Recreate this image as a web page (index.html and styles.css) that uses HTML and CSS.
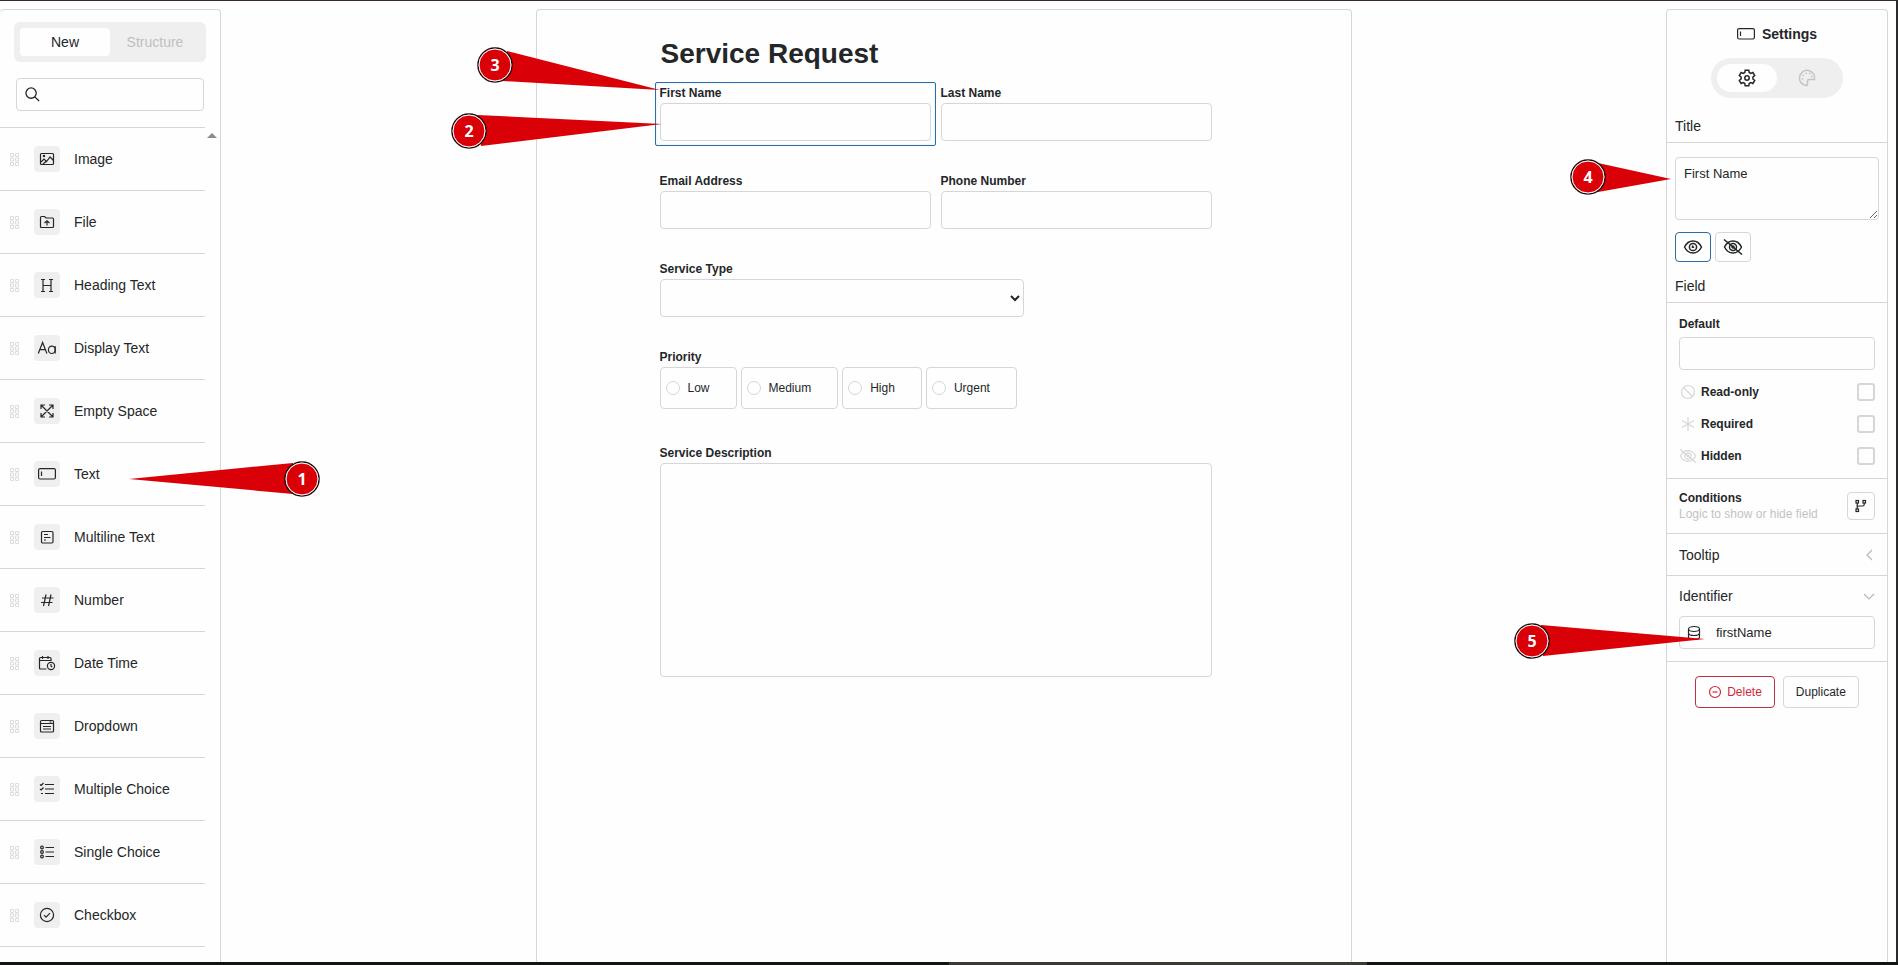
FILE: index.html
```html
<!DOCTYPE html>
<html lang="en">
<head>
    <meta charset="UTF-8">
    <meta name="viewport" content="width=device-width, initial-scale=1.0">
    <title>Service Request - Form Builder</title>
    <link rel="stylesheet" href="styles.css">
</head>
<body>
    <svg class="sprite" aria-hidden="true">
        <symbol id="grip" viewBox="0 0 10 13"><path d="M.5 .5h3v3h-3zM5.500 .5h3v3h-3zM.5 5h3v3h-3zM5.500 5h3v3h-3zM.5 9.500h3v3h-3zM5.500 9.500h3v3h-3z"/></symbol>
        <symbol id="textbox" viewBox="0 0 18 12"><rect x=".6" y=".6" width="16.800" height="10.400" rx="1.500"/><path d="M3.500 3.500v4.500"/></symbol>
        <symbol id="eye-off" viewBox="0 0 20 16"><path d="M1.500 8C3.500 4 6 2 10 2s6.500 2 8.500 6c-2 4-4.500 6-8.500 6s-6.500-2-8.500-6z"/><circle cx="10" cy="8" r="3.500"/><circle cx="10" cy="8" r="1"/><path d="M1 .5l18 15"/></symbol>
    </svg>

    <div class="page">
        <aside class="sidebar">
            <div class="tabs">
                <button type="button" class="tab active">New</button>
                <button type="button" class="tab">Structure</button>
            </div>
            <label class="search">
                <svg width="15" height="15" viewBox="0 0 16 16"><circle cx="6.500" cy="6.500" r="5.500"/><path d="M10.500 10.500l4.500 4.500"/></svg>
                <input type="search" aria-label="Search fields">
            </label>
            <div class="list-wrap">
                <ul class="fields">
                    <li><svg class="grip"><use href="#grip"/></svg><span class="tile"><svg viewBox="0 0 18 18"><rect x="2.500" y="3.500" width="13" height="11" rx="1"/><path d="M3 12l3-3 2.500 2.500L12 7l3.500 3.500M5 14l3.500-3"/><circle cx="6" cy="6" r=".6"/></svg></span>Image</li>
                    <li><svg class="grip"><use href="#grip"/></svg><span class="tile"><svg viewBox="0 0 18 18"><path d="M2.500 14V4.500q0-1 1-1h3L8 5h6.500q1 0 1 1v7.500q0 1-1 1h-11q-1 0-1-1M9 12.500V8M6.500 10L9 7.700 11.500 10"/></svg></span>File</li>
                    <li><svg class="grip"><use href="#grip"/></svg><span class="tile"><svg viewBox="0 0 18 18"><path d="M5 3.500v12M13 3.500v12M5 9.500h8M3 3.500h4M11 3.500h4M3 15.500h4M11 15.500h4"/></svg></span>Heading Text</li>
                    <li><svg class="grip"><use href="#grip"/></svg><span class="tile"><svg viewBox="0 0 18 18"><path d="M.3 14.500L4.600 3.500l4.300 11M2 10.700h5.200M17.200 7v7.500"/><ellipse cx="13.800" cy="10.800" rx="3.400" ry="3.700"/></svg></span>Display Text</li>
                    <li><svg class="grip"><use href="#grip"/></svg><span class="tile"><svg viewBox="0 0 18 18"><path d="M3.500 3.500l11 11M14.500 3.500l-11 11M3 7V3h4M11 3h4v4M3 11v4h4M11 15h4v-4"/></svg></span>Empty Space</li>
                    <li><svg class="grip"><use href="#grip"/></svg><span class="tile"><svg><use href="#textbox" y="3" width="18" height="12"/></svg></span>Text</li>
                    <li><svg class="grip"><use href="#grip"/></svg><span class="tile"><svg viewBox="0 0 18 18"><rect x="3.500" y="3.500" width="11.500" height="11.500" rx="1.200"/><path d="M6 6.500h4M6 9.500h6.500M6 12h2"/></svg></span>Multiline Text</li>
                    <li><svg class="grip"><use href="#grip"/></svg><span class="tile"><svg viewBox="0 0 18 18"><path d="M8 3.500L5.500 15M13 3.500L10.500 15M4 7h11.500M3 11.500h11.500"/></svg></span>Number</li>
                    <li><svg class="grip"><use href="#grip"/></svg><span class="tile"><svg viewBox="0 0 18 18"><path d="M8.500 15h-6q-1 0-1-1V4.500q0-1 1-1H12q1 0 1 1V7M4.500 2v3M10 2v3M2 6.500h11"/><circle cx="13" cy="12" r="3.600"/><path d="M13 10v2.200l1.300.8"/></svg></span>Date Time</li>
                    <li><svg class="grip"><use href="#grip"/></svg><span class="tile"><svg viewBox="0 0 18 18"><rect x="2.500" y="3.500" width="13" height="11.500" rx="1"/><path d="M3 6.500h12.500M5 9.500h8M5 12h8M11.500 5h2"/></svg></span>Dropdown</li>
                    <li><svg class="grip"><use href="#grip"/></svg><span class="tile"><svg viewBox="0 0 18 18"><path d="M7 4.500h9M7 9h9M7 13.500h9M2 4.500l1.200 1L5.500 3M2 9l1.200 1 2.300-2.500M3 13.500h2"/></svg></span>Multiple Choice</li>
                    <li><svg class="grip"><use href="#grip"/></svg><span class="tile"><svg viewBox="0 0 18 18"><path d="M7.500 4.500H16M7.500 9H16M7.500 13.500H16"/><rect x="2.700" y="3.200" width="2.600" height="2.600" rx="1"/><rect x="2.700" y="7.700" width="2.600" height="2.600" rx="1"/><rect x="2.700" y="12.200" width="2.600" height="2.600" rx="1"/></svg></span>Single Choice</li>
                    <li><svg class="grip"><use href="#grip"/></svg><span class="tile"><svg viewBox="0 0 18 18"><circle cx="9" cy="9" r="6.600"/><path d="M6 9.200l2 2 4-4"/></svg></span>Checkbox</li>
                </ul>
                <div class="scroll-track"><div class="scroll-up"></div></div>
            </div>

            <svg class="callout callout-1" width="200" height="40">
                <path class="wedge" d="M4 20L168 4v31z"/>
                <circle class="ring" cx="177" cy="20" r="17"/><circle class="dot" cx="177" cy="20" r="16"/>
                <text x="177" y="26">1</text>
            </svg>
        </aside>

        <main class="canvas">
            <form class="sheet">
                <h1>Service Request</h1>
                <div class="grid">
                    <div class="field selected">
                        <label for="firstName">First Name</label>
                        <input type="text" id="firstName">
                    </div>
                    <div class="field">
                        <label for="lastName">Last Name</label>
                        <input type="text" id="lastName">
                    </div>
                    <div class="field">
                        <label for="email">Email Address</label>
                        <input type="email" id="email">
                    </div>
                    <div class="field">
                        <label for="phone">Phone Number</label>
                        <input type="tel" id="phone">
                    </div>
                    <div class="field wide">
                        <label for="serviceType">Service Type</label>
                        <select id="serviceType">
                            <option value=""></option>
                        </select>
                    </div>
                    <div class="field wide" role="radiogroup" aria-labelledby="priorityLabel">
                        <div class="group-label" id="priorityLabel">Priority</div>
                        <div class="options">
                            <label><input type="radio" name="priority">Low</label>
                            <label><input type="radio" name="priority">Medium</label>
                            <label><input type="radio" name="priority">High</label>
                            <label><input type="radio" name="priority">Urgent</label>
                        </div>
                    </div>
                    <div class="field wide">
                        <label for="description">Service Description</label>
                        <textarea id="description"></textarea>
                    </div>
                </div>

                <svg class="callout callout-2" width="220" height="40">
                    <path class="wedge" d="M213 13L28 4l4 31z"/>
                    <circle class="ring" cx="20" cy="20" r="17"/><circle class="dot" cx="20" cy="20" r="16"/>
                    <text x="20" y="26">2</text>
                </svg>
                <svg class="callout callout-3" width="190" height="50">
                    <path class="wedge" d="M185 45L32 6l-4 30z"/>
                    <circle class="ring" cx="20" cy="20" r="17"/><circle class="dot" cx="20" cy="20" r="16"/>
                    <text x="20" y="26">3</text>
                </svg>
            </form>
        </main>

        <aside class="settings">
            <h2><svg width="18" height="12"><use href="#textbox"/></svg>Settings</h2>
            <div class="pill">
                <button type="button" class="active" aria-label="Options">
                    <svg width="18" height="18" viewBox="0 0 18 18"><path d="M7.200 1.200h3.600l.4 2.300 1.500.9 2.200-.9 1.800 3-1.800 1.500v2l1.800 1.500-1.800 3-2.200-.9-1.500.9-.4 2.300H7.200l-.4-2.300-1.500-.9-2.200.9-1.800-3L3.100 10V8L1.300 6.500l1.800-3 2.200.9 1.500-.9z"/><circle cx="9" cy="9" r="2.200"/></svg>
                </button>
                <button type="button" aria-label="Appearance">
                    <svg width="18" height="18" viewBox="0 0 18 18"><path d="M16.500 10.500A7.600 7.600 0 1 0 8 16.500q1.500.2 1.500-1.500v-3q0-1.500 1.500-1.500z"/><path d="M3.700 10h1.500M4.500 6.500H6M7.500 4.500H9M11 4.500h1.500M13 7.500h1.500"/></svg>
                </button>
            </div>

            <h3><label for="title">Title</label></h3>
            <div class="title-body">
                <textarea id="title">First Name</textarea>
                <div class="eyes">
                    <button type="button" class="on" aria-label="Show title">
                        <svg width="20" height="16" viewBox="0 0 20 16"><path d="M1.500 8C3.500 4 6 2 10 2s6.500 2 8.500 6c-2 4-4.500 6-8.500 6s-6.500-2-8.500-6z"/><circle cx="10" cy="8" r="3.600"/><path d="M9.500 6.500v1.700h1.700"/></svg>
                    </button>
                    <button type="button" aria-label="Hide title"><svg width="20" height="16"><use href="#eye-off"/></svg></button>
                </div>
            </div>

            <h3>Field</h3>
            <section class="field-body">
                <label for="default">Default</label>
                <input type="text" id="default">
                <div class="check">
                    <svg width="18" height="16" viewBox="0 0 18 16"><circle cx="9" cy="8" r="6.500"/><path d="M4.500 3.500l9 9"/></svg>
                    <label for="readonly">Read-only</label>
                    <input type="checkbox" id="readonly">
                </div>
                <div class="check">
                    <svg width="18" height="16" viewBox="0 0 18 16"><path d="M9 1v14M3 4.500l12 7M15 4.500l-12 7"/></svg>
                    <label for="required">Required</label>
                    <input type="checkbox" id="required">
                </div>
                <div class="check">
                    <svg width="18" height="16"><use href="#eye-off"/></svg>
                    <label for="hidden">Hidden</label>
                    <input type="checkbox" id="hidden">
                </div>
            </section>

            <section class="conditions">
                <div>
                    <strong>Conditions</strong>
                    <p>Logic to show or hide field</p>
                </div>
                <button type="button" aria-label="Edit conditions">
                    <svg width="14" height="14" viewBox="0 0 14 14"><rect x="2" y="1.500" width="2.500" height="2.500"/><rect x="2" y="10" width="2.500" height="2.500"/><rect x="9" y="1.500" width="2.500" height="2.500"/><path d="M3.200 4v6M10.200 4v1.500q0 1.500-1.500 1.500H5q-1.800 0-1.800 1.500"/></svg>
                </button>
            </section>

            <section>
                <button type="button" class="fold">Tooltip<svg width="12" height="12" viewBox="0 0 12 12"><path d="M9 1L4 6l5 5"/></svg></button>
            </section>

            <section class="identifier">
                <button type="button" class="fold">Identifier<svg width="12" height="12" viewBox="0 0 12 12"><path d="M1 4l5 5 5-5"/></svg></button>
                <label class="id-box">
                    <svg width="14" height="16" viewBox="0 0 14 16"><ellipse cx="7" cy="4" rx="5.500" ry="2.500"/><path d="M1.500 4v8c0 3.300 11 3.300 11 0V4M1.500 8c0 3.300 11 3.300 11 0"/></svg>
                    <input type="text" value="firstName" aria-label="Identifier">
                </label>
            </section>

            <div class="actions">
                <button type="button" class="delete"><svg width="14" height="14" viewBox="0 0 14 14"><circle cx="7" cy="7" r="5.500"/><path d="M4.500 7h5"/></svg>Delete</button>
                <button type="button">Duplicate</button>
            </div>

            <svg class="callout callout-4" width="110" height="40">
                <path class="wedge" d="M103 22L30 6v29z"/>
                <circle class="ring" cx="20" cy="20" r="17"/><circle class="dot" cx="20" cy="20" r="16"/>
                <text x="20" y="26">4</text>
            </svg>
            <svg class="callout callout-5" width="200" height="40">
                <path class="wedge" d="M193 18L29 4l2 31z"/>
                <circle class="ring" cx="20" cy="20" r="17"/><circle class="dot" cx="20" cy="20" r="16"/>
                <text x="20" y="26">5</text>
            </svg>
        </aside>
    </div>
    <div class="bottom-strip"></div>
</body>
</html>
```

FILE: styles.css
```css
* {
    box-sizing: border-box;
}
body {
    margin: 0;
    height: 100vh;
    display: flex;
    flex-direction: column;
    overflow: hidden;
    background: #fefefe;
    color: #242628;
    font-family: "Liberation Sans", Arial, sans-serif;
    font-size: 14px;
    line-height: 20px;
}
button, input, select, textarea {
    font-family: inherit;
    color: inherit;
    background: #fefefe;
    border: 1px solid #d6d6d8;
    border-radius: 4px;
    margin: 0;
}
button {
    padding: 0;
    cursor: pointer;
}
svg {
    fill: none;
    stroke: currentColor;
    stroke-width: 1.2;
    flex-shrink: 0;
}
.sprite {
    display: none;
}
.page {
    flex: 1;
    min-height: 0;
    display: flex;
    padding: 8px 8px 0 0;
    border-top: 1px solid #38292f;
    border-right: 2px solid #2a2a2e;
}
.bottom-strip {
    height: 3px;
    background: linear-gradient(90deg, #121414 50%, #3a3836 50%, #3a3a36 72%, #121414 72%);
}

/* left panel */
.sidebar {
    position: relative;
    width: 221px;
    display: flex;
    flex-direction: column;
    border: 1px solid #d6d6d8;
    border-left: none;
    border-bottom: none;
    border-radius: 4px 4px 0 0;
    padding-top: 12px;
}
.tabs {
    display: grid;
    grid-template-columns: 1fr 1fr;
    height: 40px;
    margin: 0 14px;
    padding: 6px;
    background: #efefef;
    border-radius: 6px;
}
.tab {
    background: none;
    border: none;
    font-size: 14px;
    color: #bfbfc1;
}
.tab.active {
    background: #fefefe;
    color: #242628;
}
.search {
    display: flex;
    align-items: center;
    gap: 8px;
    height: 33px;
    margin: 16px;
    padding: 0 8px;
    border: 1px solid #d6d6d8;
    border-radius: 4px;
}
.search svg {
    stroke-width: 1.4;
}
.search input {
    flex: 1;
    min-width: 0;
    border: none;
}
.list-wrap {
    flex: 1;
    min-height: 0;
    display: flex;
    overflow: hidden;
}
.fields {
    flex: 1;
    list-style: none;
    margin: 0;
    padding: 0;
    border-top: 1px solid #d6d6d8;
}
.fields li {
    display: flex;
    align-items: center;
    height: 63px;
    padding-left: 10px;
    border-bottom: 1px solid #d6d6d8;
}
.grip {
    width: 10px;
    height: 13px;
    margin-right: 14px;
    color: #dcdcde;
    stroke-width: 1;
}
.tile {
    display: grid;
    place-items: center;
    width: 26px;
    height: 26px;
    margin-right: 14px;
    background: #efefef;
    border-radius: 4px;
}
.tile svg {
    width: 18px;
    height: 18px;
}
.scroll-track {
    width: 15px;
    padding: 6px 2px;
}
.scroll-up {
    width: 0;
    border: 5px solid transparent;
    border-top: none;
    border-bottom-color: #8c8c8c;
}

/* form */
.canvas {
    flex: 1;
    display: flex;
    justify-content: center;
}
.sheet {
    position: relative;
    width: 100%;
    max-width: 816px;
    padding: 28px 134px 0 118px;
    border: 1px solid #d6d6d8;
    border-bottom: none;
    border-radius: 4px 4px 0 0;
}
h1 {
    margin: 0 6px 12px;
    font-size: 28px;
    line-height: 32px;
}
.grid {
    display: grid;
    grid-template-columns: 1fr 1fr;
    row-gap: 24px;
}
.field {
    min-width: 0;
    padding: 2px 4px 4px;
    border: 1px solid transparent;
    border-radius: 2px;
}
.field.selected {
    border-color: #2d6ca5;
    box-shadow: inset 0 0 3px #d3f1fa;
}
.wide {
    grid-column: span 2;
}
.field > label, .group-label {
    display: block;
    margin-bottom: 2px;
    font-size: 12px;
    line-height: 16px;
    font-weight: bold;
}
.field > input, .field > select {
    display: block;
    width: 100%;
    height: 38px;
    padding: 0 8px;
}
.field > select {
    width: 66%;
    padding: 0 4px;
}
.options {
    display: flex;
    gap: 4px;
    padding-bottom: 4px;
}
.options label {
    display: flex;
    align-items: center;
    gap: 8px;
    height: 42px;
    padding: 0 26px 0 5px;
    border: 1px solid #d6d6d8;
    border-radius: 4px;
    font-size: 12px;
}
input[type="radio"], input[type="checkbox"] {
    appearance: none;
    flex-shrink: 0;
}
input[type="radio"] {
    width: 14px;
    height: 14px;
    border-radius: 50%;
}
.field textarea {
    display: block;
    width: 100%;
    height: 214px;
    resize: none;
}

/* right panel */
.settings {
    position: relative;
    width: 222px;
    border: 1px solid #d6d6d8;
    border-bottom: none;
    border-radius: 4px 4px 0 0;
}
h2 {
    display: flex;
    align-items: center;
    justify-content: center;
    gap: 7px;
    margin: 14px 0;
    font-size: 14px;
    line-height: 20px;
}
.pill {
    display: grid;
    grid-template-columns: 1fr 1fr;
    width: 132px;
    height: 40px;
    margin: 0 auto 18px;
    padding: 6px;
    background: #efefef;
    border-radius: 20px;
}
.pill button {
    display: grid;
    place-items: center;
    background: none;
    border: none;
    border-radius: 14px;
    color: #c4c4c6;
}
.pill .active {
    background: #fefefe;
    color: #242628;
}
.pill svg, .eyes svg {
    stroke-width: 1.5;
}
h3 {
    margin: 0;
    padding: 0 8px 6px;
    border-bottom: 1px solid #d6d6d8;
    font-size: 14px;
    font-weight: normal;
    line-height: 20px;
}
.title-body {
    padding: 14px 8px;
}
.title-body textarea {
    display: block;
    width: 100%;
    height: 63px;
    margin-bottom: 12px;
    padding: 8px;
    font-size: 13px;
    line-height: 16px;
}
.eyes {
    display: flex;
    gap: 4px;
}
.eyes button {
    display: grid;
    place-items: center;
    width: 36px;
    height: 30px;
}
.eyes .on {
    border-color: #2d6ca5;
}
section {
    padding: 0 12px;
    border-bottom: 1px solid #d6d6d8;
}
.field-body {
    display: flex;
    flex-direction: column;
    gap: 12px;
    padding: 13px 12px 12px;
}
.field-body label, .conditions strong {
    display: block;
    font-size: 12px;
    line-height: 16px;
    font-weight: bold;
}
.field-body > input {
    height: 33px;
    margin-top: -7px;
}
.check {
    display: flex;
    align-items: center;
    gap: 4px;
    height: 20px;
}
.check svg {
    color: #d6d6d8;
}
.check label {
    flex: 1;
}
input[type="checkbox"] {
    width: 18px;
    height: 18px;
    border-width: 2px;
    border-radius: 3px;
}
.conditions {
    display: flex;
    align-items: center;
    justify-content: space-between;
    padding: 11px 12px;
}
.conditions p {
    margin: 0;
    font-size: 12px;
    line-height: 16px;
    color: #c2c2c4;
}
.conditions button {
    display: grid;
    place-items: center;
    width: 28px;
    height: 28px;
}
.fold {
    display: flex;
    align-items: center;
    justify-content: space-between;
    width: 100%;
    height: 41px;
    border: none;
    font-size: 14px;
}
.fold svg {
    color: #b8b8ba;
}
.identifier {
    padding-bottom: 12px;
}
.identifier .fold {
    height: 40px;
}
.id-box {
    display: flex;
    align-items: center;
    gap: 15px;
    height: 33px;
    padding: 0 7px;
    border: 1px solid #d6d6d8;
    border-radius: 4px;
}
.id-box input {
    flex: 1;
    min-width: 0;
    padding: 0;
    border: none;
    font-size: 13px;
}
.actions {
    display: flex;
    justify-content: center;
    gap: 8px;
    padding-top: 14px;
}
.actions button {
    display: flex;
    align-items: center;
    gap: 5px;
    height: 32px;
    padding: 0 12px;
    font-size: 12px;
}
.actions .delete {
    color: #d0283c;
    border-color: #b83244;
}

/* numbered callouts */
.callout {
    position: absolute;
    z-index: 1;
    stroke: none;
    pointer-events: none;
}
.callout .wedge {
    fill: #d90007;
}
.callout .ring {
    fill: #fff;
    stroke: #1c0a0a;
    stroke-width: 1.5;
}
.callout .dot {
    fill: #d90007;
    stroke: #fff;
    stroke-width: 1;
}
.callout text {
    fill: #fff;
    font-family: "Open Sans", "Noto Sans", sans-serif;
    font-size: 16px;
    font-weight: bold;
    text-anchor: middle;
}
.callout-1 {
    left: 125px;
    top: 449px;
}
.callout-2 {
    left: -88px;
    top: 101px;
}
.callout-3 {
    left: -62px;
    top: 35px;
}
.callout-4 {
    left: -99px;
    top: 147px;
}
.callout-5 {
    left: -155px;
    top: 611px;
}
```
